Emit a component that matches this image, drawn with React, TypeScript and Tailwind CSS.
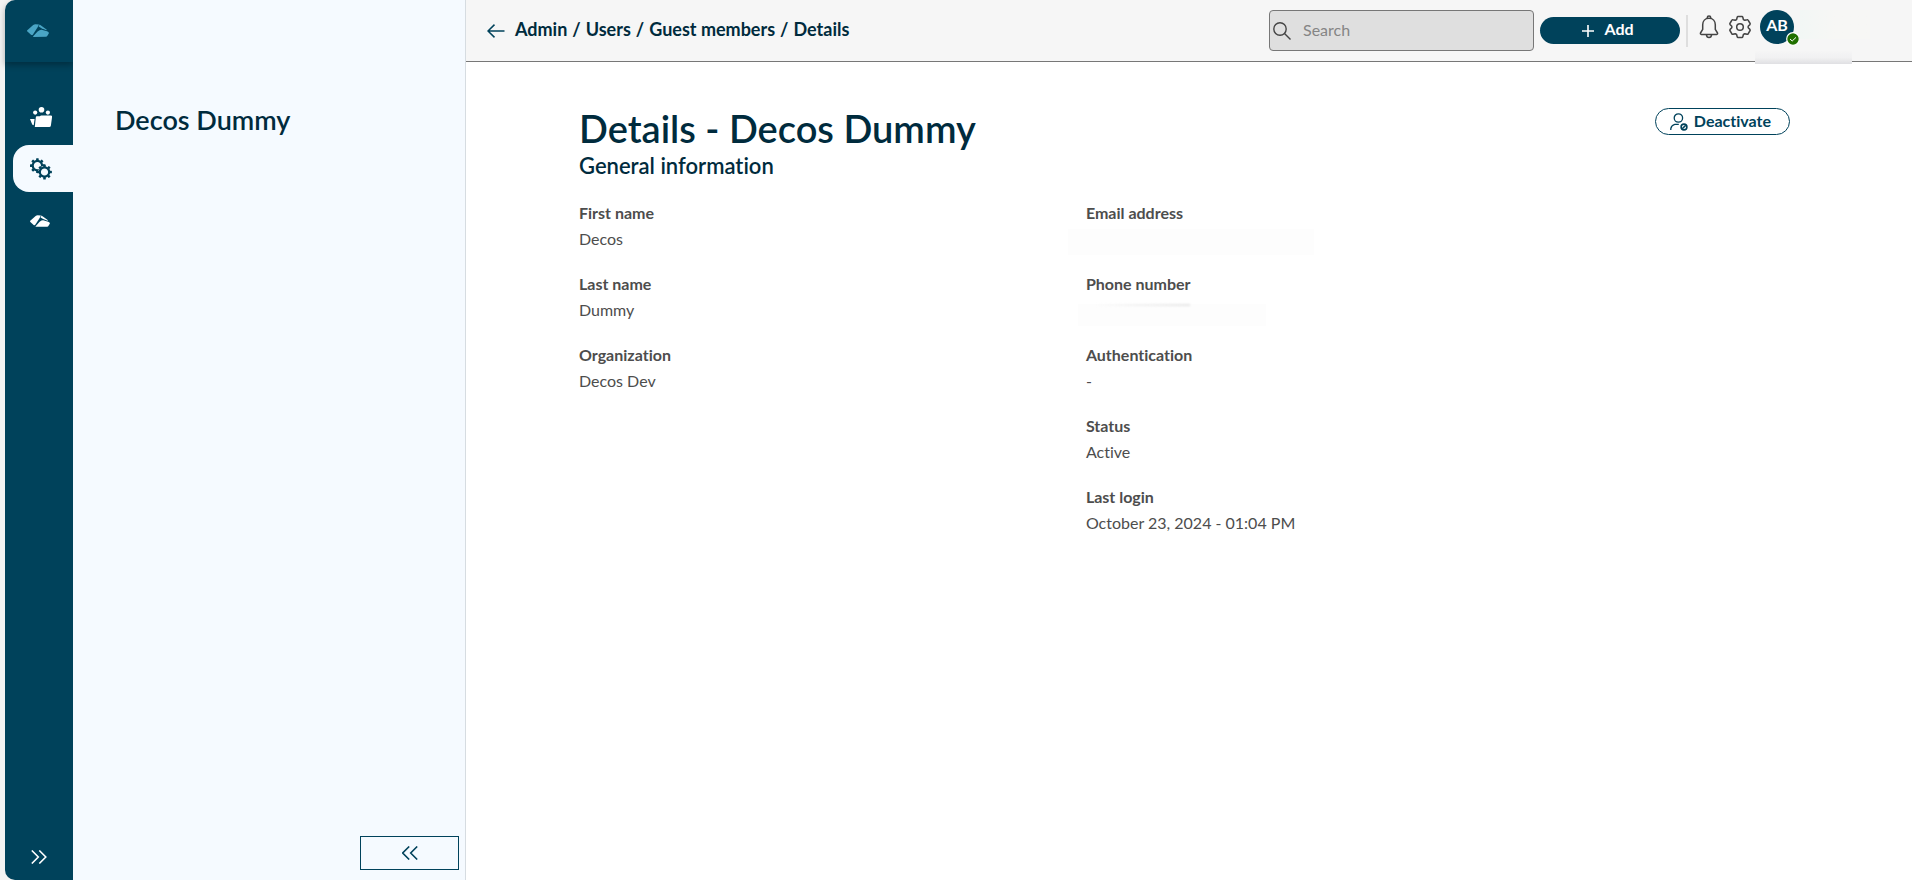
import type { ReactNode } from 'react';

type Field = {
  label: string;
  value?: string;
  hidden?: 'email' | 'phone';
};

const leftFields: Field[] = [
  { label: 'First name', value: 'Decos' },
  { label: 'Last name', value: 'Dummy' },
  { label: 'Organization', value: 'Decos Dev' },
];

const rightFields: Field[] = [
  { label: 'Email address', hidden: 'email' },
  { label: 'Phone number', hidden: 'phone' },
  { label: 'Authentication', value: '-' },
  { label: 'Status', value: 'Active' },
  { label: 'Last login', value: 'October 23, 2024 - 01:04 PM' },
];

function LogoIcon({ className }: { className?: string }) {
  return (
    <svg viewBox="0 0 22 13" className={className} fill="currentColor" aria-hidden="true">
      <path d="M.3 6.200 6.200 1Q7.200.2 8.400.2L12 .4 10.600 3.200 6 10.400Q5.200 11.600 4 10.800L.4 7.600Q-.3 6.900.3 6.200Z" />
      <path d="M12.600.5 19.500 5.400Q20 6 19.400 6.300L14.500 4.200 11.600 2.600Z" />
      <path d="M6.200 12.200 10.600 7.400Q13 5.600 14.500 5.800L20 7.200Q22 7.600 21.900 9.200L20.400 11.800Q20 12.800 18.800 12.800L6.600 12.900Q5.800 12.800 6.200 12.200Z" />
    </svg>
  );
}

function FolderPeopleIcon() {
  return (
    <svg width="22" height="20" viewBox="0 0 22 20" fill="currentColor" aria-hidden="true">
      <circle cx="11.5" cy="2.8" r="2.8" />
      <circle cx="5.2" cy="5.6" r="2.1" />
      <circle cx="17.9" cy="5.6" r="2.1" />
      <path d="M0 12h4.6l-.9 6.2q-1.600-.2-2-2Z" />
      <path d="M6.800 9.300h3l1.200-.9h10q1.300.1 1.100 1.400l-1.200 8.600q-.2 1.500-1.700 1.500H4.800l1-9.400q.1-1.100 1-1.200Z" />
    </svg>
  );
}

function Cog({ cx, cy }: { cx: number; cy: number }) {
  return (
    <g transform={`translate(${cx} ${cy})`}>
      <circle r="4.700" fill="none" stroke="currentColor" strokeWidth="2.200" />
      {[0, 45, 90, 135, 180, 225, 270, 315].map((angle) => (
        <rect key={angle} x="-1.300" y="-7.400" width="2.600" height="2.400" rx=".5" fill="currentColor" transform={`rotate(${angle})`} />
      ))}
    </g>
  );
}

function CogsIcon() {
  return (
    <svg width="22" height="22" viewBox="0 0 22 22" aria-hidden="true">
      <Cog cx={7.4} cy={7.6} />
      <circle cx="14.500" cy="14" r="6.200" fill="#f5faff" />
      <Cog cx={14.5} cy={14} />
    </svg>
  );
}

function DoubleChevron({ left }: { left?: boolean }) {
  return (
    <svg
      width="16"
      height="14"
      viewBox="0 0 16 14"
      fill="none"
      stroke="currentColor"
      strokeWidth="1.6"
      aria-hidden="true"
    >
      <path d={left ? 'M7.200.5.7 7l6.500 6.500M15.200.5 8.700 7l6.500 6.500' : 'M.8.5 7.300 7 .8 13.500M8.300.5 14.800 7l-6.500 6.500'} />
    </svg>
  );
}

function BackIcon() {
  return (
    <svg width="18" height="14" viewBox="0 0 18 14" fill="none" stroke="currentColor" strokeWidth="1.5" aria-hidden="true">
      <path d="M7.500.6 1 7l6.500 6.400M1 7h16.500" />
    </svg>
  );
}

function SearchIcon() {
  return (
    <svg width="18" height="18" viewBox="0 0 18 18" fill="none" stroke="currentColor" strokeWidth="1.4" aria-hidden="true">
      <circle cx="7" cy="7" r="6.200" />
      <path d="m11.500 11.500 6 6" />
    </svg>
  );
}

function BellIcon() {
  return (
    <svg width="20" height="24" viewBox="0 0 20 24" fill="none" stroke="currentColor" strokeWidth="1.5" strokeLinejoin="round" aria-hidden="true">
      <path d="M8.300 3.200V2.600a1.700 1.700 0 0 1 3.400 0v.6" />
      <path d="M10 3.200c-4 0-6.300 3-6.300 6.600v4.600L1.500 18q-.4 1.300.8 1.400h15.400q1.200-.1.800-1.400l-2.200-3.600V9.800c0-3.600-2.300-6.600-6.300-6.600Z" />
      <path d="M7.400 19.600q.3 2.900 2.600 2.900t2.600-2.900" />
    </svg>
  );
}

function SettingsIcon() {
  return (
    <svg width="24" height="24" viewBox="0 0 24 24" fill="none" stroke="currentColor" strokeWidth="1.5" strokeLinejoin="round" aria-hidden="true">
      <circle cx="12" cy="12" r="3.300" />
      <path d="M10 1.500h4q.6 0 .8.800l.6 2.200 1.400.8 2.300-.6q.7-.2 1 .4l2 3.400q.3.500-.2 1.100L20.200 11.200v1.600l1.700 1.600q.5.600.2 1.100l-2 3.400q-.3.600-1 .4l-2.300-.6-1.400.8-.6 2.200q-.2.800-.8.800h-4q-.6 0-.8-.8l-.6-2.200-1.400-.8-2.300.6q-.7.200-1-.4l-2-3.400q-.3-.5.2-1.100l1.700-1.600v-1.600L2.100 9.600q-.5-.6-.2-1.100l2-3.400q.3-.6 1-.4l2.300.6 1.400-.8.6-2.200q.2-.8.8-.8Z" />
    </svg>
  );
}

function UserBlockIcon() {
  return (
    <svg width="18" height="18" viewBox="0 0 18 18" fill="none" stroke="currentColor" strokeWidth="1.300" aria-hidden="true">
      <circle cx="8.400" cy="5" r="4.200" />
      <path d="M.8 17v-1.400q.6-3.400 4-4.200h4" />
      <circle cx="14" cy="14" r="2.900" strokeWidth="1.600" />
      <path d="m12.200 15.800 3.600-3.600" strokeWidth="1.600" />
    </svg>
  );
}

function RailButton({ label, active, children }: { label: string; active?: boolean; children: ReactNode }) {
  return (
    <button
      type="button"
      aria-label={label}
      className={
        active
          ? 'ml-2 flex h-[47px] items-center rounded-l-2xl bg-[#f5faff] pl-[17px] text-[#00425b]'
          : 'ml-2 flex h-[47px] items-center pl-[17px] text-white'
      }
    >
      {children}
    </button>
  );
}

function FieldList({ fields }: { fields: Field[] }) {
  return (
    <dl className="flex flex-col gap-[19px] text-base text-[#4d4d4d]">
      {fields.map((field) => (
        <div key={field.label} className="h-[52px]">
          <dt className="leading-[26px] font-bold">{field.label}</dt>
          <dd className="leading-[26px]">
            {field.value}
            {field.hidden === 'email' && (
              <span className="-ml-[18px] block w-[246px] pt-[3px]">
                <span className="block h-[26px] bg-[#fdfdfd]" />
              </span>
            )}
            {field.hidden === 'phone' && (
              <span className="-ml-2 block w-[188px] pt-[7px]">
                <span className="block h-[22px] bg-[#fdfdfd]">
                  <span className="ml-4 block h-0.5 w-24 bg-linear-to-r from-transparent to-[#e6e6e6] blur-[1px]" />
                </span>
              </span>
            )}
          </dd>
        </div>
      ))}
    </dl>
  );
}

export default function App() {
  return (
    <div className="flex min-h-screen bg-[#f3f3f3] pl-[5px] font-['Lato',sans-serif] text-[#002b3d] [font-variant-ligatures:none]">
      <nav className="flex w-[68px] shrink-0 flex-col rounded-l-[10px] bg-[#00425b]">
        <a href="#" aria-label="Home" className="flex h-[62px] items-center rounded-tl-[10px] pb-0.5 pl-[22px] text-[#4aa5c5] shadow-[0_3px_6px_rgba(0,0,0,0.3)]">
          <LogoIcon className="h-[13px] w-[22px]" />
        </a>
        <div className="mt-[31px] flex flex-col gap-[5px]">
          <RailButton label="Workspaces">
            <FolderPeopleIcon />
          </RailButton>
          <RailButton label="Admin" active>
            <CogsIcon />
          </RailButton>
          <RailButton label="Decos">
            <LogoIcon className="h-3 w-5" />
          </RailButton>
        </div>
        <button type="button" aria-label="Expand menu" className="mt-auto mb-4 ml-[26px] self-start text-white">
          <DoubleChevron />
        </button>
      </nav>

      <aside className="flex w-[393px] shrink-0 flex-col border-r border-[#d6dce1] bg-[#f5faff]">
        <h2 className="mt-[104px] ml-[42px] text-[27px] leading-8 font-semibold">Decos Dummy</h2>
        <button
          type="button"
          aria-label="Collapse panel"
          className="mt-auto mr-1.5 mb-2.5 flex h-[34px] w-[99px] items-center justify-center self-end border border-[#00425b] text-[#00425b]"
        >
          <DoubleChevron left />
        </button>
      </aside>

      <div className="flex min-w-0 flex-1 flex-col bg-white">
        <header className="flex h-[62px] items-center border-b border-[#777] bg-[#f6f6f6]">
          <a href="#" aria-label="Back" className="ml-[21px] text-[#00425b]">
            <BackIcon />
          </a>
          <nav aria-label="Breadcrumb" className="mb-1 ml-2.5 flex gap-[5px] text-lg leading-6 font-bold whitespace-nowrap">
            <a href="#">Admin</a>
            <span>/</span>
            <a href="#">Users</a>
            <span>/</span>
            <a href="#">Guest members</a>
            <span>/</span>
            <span>Details</span>
          </nav>

          <label className="ml-auto flex h-[41px] w-[265px] items-center gap-3 rounded border border-[#777] bg-[#dfdfdf] pl-[3px] text-[#444]">
            <SearchIcon />
            <input
              type="search"
              aria-label="Search"
              placeholder="Search"
              className="mb-0.5 min-w-0 flex-1 bg-transparent text-base outline-none placeholder:text-[#858585]"
            />
          </label>
          <button
            type="button"
            className="ml-1.5 flex h-[27px] w-[140px] items-center justify-center gap-2.5 rounded-full bg-[#00425b] pr-1 text-base font-bold text-white"
          >
            <svg width="12" height="12" viewBox="0 0 12 12" stroke="currentColor" strokeWidth="1.600" aria-hidden="true">
              <path d="M6 0v12M0 6h12" />
            </svg>
            <span className="mb-1">Add</span>
          </button>
          <span className="ml-1.5 h-8 w-0.5 bg-[#dedede]" />
          <button type="button" aria-label="Notifications" className="mb-2 ml-[11px] text-[#444]">
            <BellIcon />
          </button>
          <button type="button" aria-label="Settings" className="mb-2 ml-[9px] text-[#444]">
            <SettingsIcon />
          </button>
          <button
            type="button"
            aria-label="Account"
            className="relative mb-2 ml-2 flex size-[34px] items-center justify-center rounded-full bg-[#00425b] pb-1 text-base font-bold text-white"
          >
            AB
            <svg width="14" height="14" viewBox="0 0 14 14" className="absolute -right-1.5 -bottom-0.5" aria-hidden="true">
              <circle cx="7" cy="7" r="6.300" fill="#217000" stroke="#fff" strokeWidth="1.200" />
              <path d="m4 7 2.200 2 3.800-3.600" fill="none" stroke="#fff" />
            </svg>
          </button>
          <span className="relative mr-[42px] mb-3 ml-1.5 h-[29px] w-[70px] bg-linear-to-r from-[#f2f7f5] via-[#f7f7f5] to-[#f7f7f5]">
            <span className="absolute top-[41px] -left-[45px] h-[13px] w-[97px] bg-linear-to-b from-[#f5f5f5] via-[#f1f1f2] to-[#e0e0e3]" />
          </span>
        </header>

        <main className="pt-[46px] pr-[122px] pl-[113px]">
          <div className="flex items-start justify-between">
            <h1 className="text-[38px] leading-10 font-semibold">Details - Decos Dummy</h1>
            <button
              type="button"
              className="flex h-[27px] items-center gap-1.5 rounded-full border border-[#00425b] pr-[18px] pl-3.5 text-base font-bold text-[#00425b]"
            >
              <UserBlockIcon />
              <span className="mb-0.5">Deactivate</span>
            </button>
          </div>
          <h2 className="mt-1 text-[22px] leading-7 font-semibold">General information</h2>
          <div className="mt-5 grid grid-cols-[5fr_7fr] gap-x-1">
            <FieldList fields={leftFields} />
            <FieldList fields={rightFields} />
          </div>
        </main>
      </div>
    </div>
  );
}
